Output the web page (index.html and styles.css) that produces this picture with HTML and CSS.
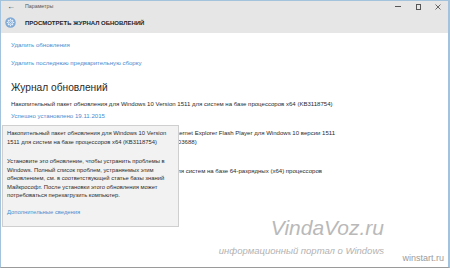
FILE: index.html
```html
<!DOCTYPE html>
<html lang="ru">
<head>
<meta charset="utf-8">
<title>Параметры</title>
<link rel="stylesheet" href="styles.css">
</head>
<body>
<div class="window">
  <div class="titlebar">
    <span class="back">&#8592;</span>
    <span class="apptitle">Параметры</span>
    <span class="spacer"></span>
    <span class="ctl ctl-min"><span class="min-line"></span></span>
    <span class="ctl ctl-max"><span class="max-box"></span></span>
    <span class="ctl ctl-close">
      <svg width="6" height="6" viewBox="0 0 6 6"><path d="M0.5 0.5 L5.5 5.5 M5.5 0.5 L0.5 5.5" stroke="#444" stroke-width="0.8"/></svg>
    </span>
  </div>
  <div class="header">
    <svg class="gear" width="11" height="11" viewBox="0 0 22 22">
      <circle cx="11" cy="11" r="10.5" fill="#7ea9d6"/>
      <g fill="none" stroke="#e8f0fa" stroke-width="1.6">
        <circle cx="11" cy="11" r="5"/>
        <circle cx="11" cy="11" r="2"/>
      </g>
      <g stroke="#e8f0fa" stroke-width="2.2">
        <path d="M11 3.5v3M11 15.5v3M3.5 11h3M15.5 11h3M5.7 5.7l2.1 2.1M14.2 14.2l2.1 2.1M16.3 5.7l-2.1 2.1M7.8 14.2l-2.1 2.1"/>
      </g>
    </svg>
    <span class="header-title">ПРОСМОТРЕТЬ ЖУРНАЛ ОБНОВЛЕНИЙ</span>
  </div>
  <div class="content">
    <a class="link action">Удалить обновления</a>
    <a class="link action">Удалить последнюю предварительную сборку</a>
    <h1 class="heading">Журнал обновлений</h1>
    <div class="item">
      <div class="item-title">Накопительный пакет обновления для Windows 10 Version 1511 для систем на базе процессоров x64 (KB3118754)</div>
      <a class="link item-status">Успешно установлено 19.11.2015</a>
    </div>
    <div class="item">
      <div class="item-title">Обновление системы безопасности для Flash Player для Internet Explorer Flash Player для Windows 10 версии 1511<br>для систем на базе 64-разрядных (x64) процессоров (KB3103688)</div>
      <a class="link item-status">Успешно установлено 11.11.2015</a>
    </div>
    <div class="item">
      <div class="item-title">Накопительное обновление для Windows 10 версии 1511 для систем на базе 64-разрядных (x64) процессоров<br>(KB3105211)</div>
      <a class="link item-status">Успешно установлено 11.11.2015</a>
    </div>
  </div>

  <div class="tooltip">
    <p class="tip-title">Накопительный пакет обновления для Windows 10 Version<br>1511 для систем на базе процессоров x64 (KB3118754)</p>
    <p class="tip-body">Установите это обновление, чтобы устранить проблемы в<br>Windows. Полный список проблем, устраняемых этим<br>обновлением, см. в соответствующей статье базы знаний<br>Майкрософт. После установки этого обновления может<br>потребоваться перезагрузить компьютер.</p>
    <a class="link tip-link">Дополнительные сведения</a>
  </div>

  <div class="watermark">
    <span class="wm-logo">VindaVoz.ru</span>
    <span class="wm-sub">информационный портал о Windows</span>
    <span class="wm-site">winstart.ru</span>
  </div>
</div>
</body>
</html>
```
FILE: styles.css
```css
* { box-sizing: border-box; }
html, body { margin: 0; padding: 0; background: #ffffff; }
body {
  font-family: "Liberation Sans", Arial, sans-serif;
  color: #2b2b2b;
}
.window {
  position: relative;
  width: 450px;
  height: 268px;
  border: 1px solid #a3c3dd;
  border-bottom-color: #9a9a9a;
  border-right-width: 2px;
  background: #ffffff;
  overflow: hidden;
}
.titlebar {
  height: 11px;
  background: #e6e6e6;
  display: flex;
  align-items: center;
}
.back {
  width: 24px;
  padding-left: 6px;
  font-size: 8px;
  line-height: 11px;
  color: #444;
}
.apptitle {
  font-size: 5.3px;
  color: #555;
  line-height: 11px;
}
.spacer { flex: 1; }
.ctl {
  width: 20px;
  height: 11px;
  display: flex;
  align-items: center;
  justify-content: center;
}
.min-line { width: 6px; height: 1px; background: #555; }
.max-box { width: 5px; height: 6px; border: 1px solid #555; }
.header {
  height: 21px;
  background: #e6e6e6;
  display: flex;
  align-items: center;
  padding-left: 4px;
}
.gear { margin-right: 9px; flex: none; }
.header-title {
  font-size: 6px;
  font-weight: bold;
  color: #1f1f1f;
}
.content {
  padding: 7px 0 0 10px;
  display: flex;
  flex-direction: column;
  align-items: flex-start;
}
.link {
  color: #4a8cd0;
  font-size: 6.1px;
  line-height: 9px;
}
.action + .action { margin-top: 9px; }
.heading {
  margin: 14px 0 0 0;
  font-size: 10.2px;
  line-height: 14px;
  font-weight: normal;
  color: #2a2a2a;
}
.item { margin-top: 9px; }
.heading + .item { margin-top: 5px; }
.item-title {
  font-size: 6.05px;
  line-height: 9px;
  color: #2b2b2b;
  white-space: nowrap;
}
.item-status { display: block; margin-top: 2px; }
.tooltip {
  position: absolute;
  left: 1px;
  top: 124px;
  width: 177px;
  height: 102px;
  background: #f2f2f2;
  border: 1px solid #cfcfcf;
  padding: 3px 4px;
}
.tooltip .tip-title,
.tooltip .tip-body {
  margin: 0;
  font-size: 5.85px;
  line-height: 8.5px;
  color: #2b2b2b;
  white-space: nowrap;
}
.tooltip .tip-body { margin-top: 11px; }
.tooltip .tip-link { display: block; margin-top: 8px; font-size: 5.85px; }
.watermark {
  position: absolute;
  right: 4px;
  top: 214px;
  display: flex;
  flex-direction: column;
  align-items: flex-end;
}
.wm-logo {
  font-size: 21px;
  line-height: 26px;
  font-style: italic;
  color: #b9b9b9;
  margin-right: 60px;
}
.wm-sub {
  font-size: 9.5px;
  line-height: 10px;
  font-style: italic;
  color: #b3b3b3;
  margin-right: 60px;
  margin-top: 5px;
}
.wm-site {
  font-size: 9px;
  line-height: 9px;
  color: #9b9b9b;
  margin-top: -2px;
}
```
